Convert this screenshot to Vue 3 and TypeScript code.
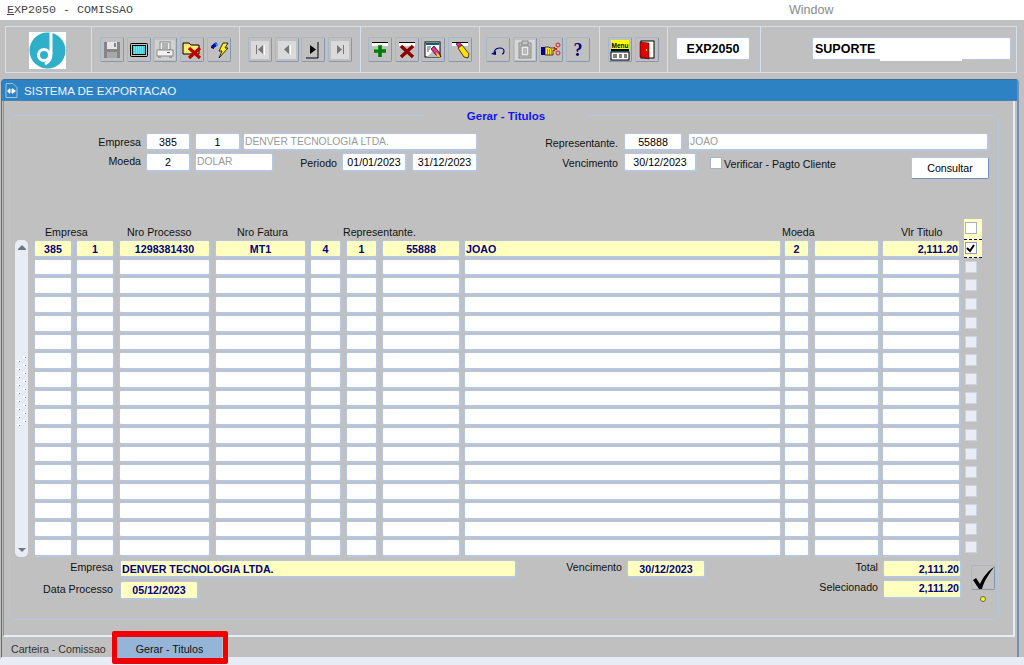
<script setup lang="ts">
// Oracle Forms style screen: EXP2050 - Gerar Titulos

type Tool = { icon: string; off?: boolean }
type Column = { width: number; gap: number; title: string; indent: number; value: string; align?: string }

const icons: Record<string, string> = {
  save: '<rect x="2" y="2" width="16" height="16" fill="#858585"/><rect x="5" y="2" width="10" height="7" fill="#e6e6e6"/><rect x="12" y="3" width="2" height="4" fill="#858585"/><rect x="5" y="12" width="10" height="6" fill="#a8a8a8"/>',
  screen: '<rect x="1" y="3" width="18" height="14" rx="2" fill="#000"/><rect x="2" y="4" width="16" height="12" fill="#c0c0c0"/><rect x="3" y="5" width="14" height="10" fill="#000"/><rect x="4" y="6" width="12" height="8" fill="#2fd6e8"/><path d="M5 7h10M5 9h10M5 11h10M5 13h10" stroke="#a8f0f8" stroke-dasharray="1 1"/>',
  print: '<rect x="0" y="0" width="20" height="20" fill="#d0d0d0"/><rect x="5" y="2" width="10" height="8" fill="#eee" stroke="#888"/><path d="M7 4h6M7 6h6M7 8h6" stroke="#777"/><rect x="2" y="10" width="16" height="6" fill="#f2f2f2" stroke="#888"/><rect x="12" y="12" width="3" height="1" fill="#555"/><rect x="3" y="16" width="3" height="2" fill="#999"/><rect x="14" y="16" width="3" height="2" fill="#999"/>',
  closeFile: '<path d="M1 3h6l2 2h8v9H1z" fill="#f5e56b" stroke="#000"/><path d="M3 7h12M3 9h12M3 11h12" stroke="#fff" stroke-dasharray="1 1"/><path d="M7 8l11 10M18 8L7 18" stroke="#c00000" stroke-width="3.200"/>',
  bolt: '<path d="M2 6l5-4 2 3-4 3z" fill="#0000c0"/><path d="M6 2l3 3-2 1z" fill="#20c0e0"/><path d="M2 6l3 2 0 1-3-1z" fill="#000"/><path d="M14 3l5 0-3 5 3 0-9 10 3-7-3 0z" fill="#ffee22" stroke="#000" stroke-width=".8"/>',
  first: '<rect x="1" y="1" width="18" height="18" fill="#dadada"/><rect x="6" y="5" width="1" height="9" fill="#777"/><path d="M13 5v9L8 9.500z" fill="#777"/><rect x="14" y="5" width="1" height="10" fill="#fff"/>',
  prev: '<rect x="1" y="1" width="18" height="18" fill="#dadada"/><path d="M12 5v9L7 9.500z" fill="#777"/><rect x="13" y="5" width="1" height="10" fill="#fff"/>',
  next: '<path d="M15 2v16H3" fill="none" stroke="#000"/><path d="M7 5v9l6-4.500z" fill="#000"/>',
  last: '<rect x="1" y="1" width="18" height="18" fill="#dadada"/><path d="M7 5v9l5-4.500z" fill="#777"/><rect x="13" y="5" width="1" height="9" fill="#777"/>',
  add: '<rect x="2" y="3" width="16" height="3" fill="#fff"/><rect x="2" y="2" width="16" height="1" fill="#000"/><path d="M10 5v12M4 11h12" stroke="#007a00" stroke-width="3.600"/><path d="M8.500 5.500h2M4.500 9.500h4" stroke="#20d020"/>',
  remove: '<rect x="2" y="3" width="16" height="3" fill="#fff"/><rect x="2" y="2" width="16" height="1" fill="#000"/><path d="M4 6l12 11M16 6L4 17" stroke="#8c0000" stroke-width="3.400"/>',
  editForm: '<rect x="2" y="2" width="15" height="15" fill="#fff" stroke="#000"/><rect x="3" y="3" width="13" height="2" fill="#00607a"/><path d="M4 7h4M4 9h3M4 11h2" stroke="#555"/><path d="M4 17l6-6 6 6z" fill="#bbb"/><path d="M8 9l3-3 5 6 2 5-5-2z" fill="#e83088" stroke="#000" stroke-width=".7"/><path d="M13 12l3 3 2 3-4-2z" fill="#ffe000"/>',
  erase: '<rect x="2" y="3" width="16" height="3" fill="#fff"/><rect x="2" y="2" width="16" height="1" fill="#000"/><path d="M6 4l3-2 3 3-3 3z" fill="#e83088" stroke="#000" stroke-width=".6"/><path d="M8 8l4-3 7 9-1 4-4-1z" fill="#ffe000" stroke="#000" stroke-width=".7"/>',
  undo: '<path d="M6 12c1-3 3-4 6-4 3 0 4 2 4 3 0 2-1 3-2 3" fill="none" stroke="#000080" stroke-width="1.100"/><path d="M3 14l5-3 0 4z" fill="#000080"/>',
  paste: '<rect x="0" y="0" width="20" height="20" fill="#d6d6d6"/><rect x="4" y="3" width="12" height="15" fill="#c4c4c4" stroke="#8a8a8a"/><rect x="7" y="1" width="6" height="4" fill="#c4c4c4" stroke="#8a8a8a"/><rect x="6" y="6" width="8" height="10" fill="#e8e8e8" stroke="#8a8a8a"/><path d="M8 9h4M8 11h4M8 13h4" stroke="#8a8a8a"/>',
  hand: '<rect x="0" y="7" width="4" height="8" fill="#0000a0"/><path d="M4 7h4l1 1h5v2h-2v5H4z" fill="#ffe040" stroke="#000" stroke-width=".7"/><path d="M6 10h5M6 12h5M6 14h5" stroke="#444" stroke-dasharray="1 1"/><circle cx="17" cy="5" r="2" fill="none" stroke="#d02020"/><circle cx="17" cy="13" r="2" fill="none" stroke="#d02020"/><path d="M13 7l3 3M13 11l3-3" stroke="#d02020"/>',
  help: '<text x="10" y="16" text-anchor="middle" font-family="Liberation Serif, serif" font-size="18" font-weight="700" fill="#000080">?</text>',
  menu: '<rect x="1" y="0" width="18" height="9" fill="#ffff00"/><text x="10" y="8" text-anchor="middle" font-family="Liberation Sans, sans-serif" font-size="7.500" font-weight="700" textLength="17" lengthAdjust="spacingAndGlyphs" fill="#000">Menu</text><rect x="1" y="9" width="18" height="2" fill="#000"/><rect x="1" y="11" width="18" height="1" fill="#00c0d0"/><rect x="1" y="12" width="18" height="8" fill="#fff" stroke="#000"/><path d="M3 15h4M9 15h3M14 15h3M3 17h4M9 17h3M14 17h3" stroke="#000"/>',
  exit: '<rect x="4" y="1" width="13" height="17" fill="#fff" stroke="#000"/><path d="M3 2l9 1v16l-9-2z" fill="#e00000" stroke="#000" stroke-width=".5"/><rect x="9" y="9" width="1" height="2" fill="#ffe000"/>'
}

const toolGroups: Tool[][] = [
  [{ icon: 'save', off: true }, { icon: 'screen' }, { icon: 'print', off: true }, { icon: 'closeFile' }, { icon: 'bolt' }],
  [{ icon: 'first', off: true }, { icon: 'prev', off: true }, { icon: 'next' }, { icon: 'last', off: true }],
  [{ icon: 'add' }, { icon: 'remove' }, { icon: 'editForm' }, { icon: 'erase' }],
  [{ icon: 'undo' }, { icon: 'paste', off: true }, { icon: 'hand' }, { icon: 'help' }],
  [{ icon: 'menu' }, { icon: 'exit' }]
]

const columns: Column[] = [
  { width: 38, gap: 4, title: 'Empresa', indent: 11, value: '385' },
  { width: 38, gap: 5, title: '', indent: 0, value: '1' },
  { width: 91, gap: 5, title: 'Nro Processo', indent: 8, value: '1298381430' },
  { width: 91, gap: 4, title: 'Nro Fatura', indent: 22, value: 'MT1' },
  { width: 31, gap: 5, title: '', indent: 0, value: '4' },
  { width: 31, gap: 5, title: 'Representante.', indent: -3, value: '1' },
  { width: 78, gap: 4, title: '', indent: 0, value: '55888' },
  { width: 317, gap: 3, title: '', indent: 0, value: 'JOAO', align: 'left' },
  { width: 25, gap: 5, title: 'Moeda', indent: -2, value: '2' },
  { width: 65, gap: 3, title: '', indent: 0, value: '' },
  { width: 78, gap: 4, title: 'Vlr Titulo', indent: 19, value: '2,111.20', align: 'right' }
]

const rowCount = 17
const gripDots = 9
</script>

<template>
  <div class="screen">
    <header class="menubar">
      <span class="form-name"><u>E</u>XP2050 - COMISSAO</span>
      <span class="menu-window">Window</span>
    </header>

    <div class="toolbar-wrap">
      <div class="toolbar">
        <div class="logo-cell">
          <svg class="logo" width="37" height="37" viewBox="0 0 37 37">
            <rect width="37" height="37" fill="#fff" />
            <circle cx="18.500" cy="18.500" r="18" fill="#2fb0c8" />
            <path d="M22 1v21c0 5-2 8-6 10" fill="none" stroke="#fff" stroke-width="3" />
            <circle cx="15" cy="23" r="5.500" fill="none" stroke="#fff" stroke-width="3" />
          </svg>
        </div>
        <div v-for="(group, g) in toolGroups" :key="g" class="tool-group" :class="'group-' + g">
          <button v-for="tool in group" :key="tool.icon" class="tool" type="button">
            <svg width="20" height="20" viewBox="0 0 20 20" v-html="icons[tool.icon]"></svg>
          </button>
        </div>
        <div class="tool-group group-code">
          <span class="code-box">EXP2050</span>
        </div>
        <div class="tool-group group-user">
          <span class="user-box">SUPORTE</span>
        </div>
      </div>
    </div>

    <section class="window">
      <div class="window-title">
        <svg class="title-icon" width="13" height="15" viewBox="0 0 13 15">
          <path d="M1 .5h7l4 4v10H1z" fill="#2d82c3" stroke="#9cc4e4" />
          <path d="M2 8l3-3v6zM11 8L7 5v6z" fill="#fff" />
          <rect x="5.500" y="6" width="1" height="4" fill="#fff" />
        </svg>
        <span>SISTEMA DE EXPORTACAO</span>
      </div>

      <div class="canvas">
        <div class="frame">
          <div class="frame-title">Gerar - Titulos</div>

          <div class="form-row">
            <label class="lbl lbl-left">Empresa</label>
            <span class="field w44 ml5">385</span>
            <span class="field w45 ml5">1</span>
            <span class="field w234 ml3 muted">DENVER TECNOLOGIA LTDA.</span>
            <label class="lbl lbl-right">Representante.</label>
            <span class="field w58 ml6">55888</span>
            <span class="field w300 ml6 muted">JOAO</span>
          </div>
          <div class="form-row form-row-second">
            <label class="lbl lbl-left">Moeda</label>
            <span class="field w44 ml5">2</span>
            <span class="field w78 ml5 muted">DOLAR</span>
            <label class="lbl lbl-period">Periodo</label>
            <span class="field w64 ml5">01/01/2023</span>
            <span class="field w65 ml6">31/12/2023</span>
            <label class="lbl lbl-right">Vencimento</label>
            <span class="field w72 ml6">30/12/2023</span>
            <span class="check check-form"></span>
            <label class="lbl lbl-check">Verificar - Pagto Cliente</label>
            <button class="query-btn" type="button">Consultar</button>
          </div>

          <div class="grid-head">
            <span
              v-for="(col, c) in columns"
              :key="c"
              class="head-cell"
              :style="{ width: col.width + 'px', marginRight: col.gap + 'px', textIndent: col.indent + 'px' }"
            >
              {{ col.title }}
            </span>
            <span class="head-check"><i class="check"></i></span>
          </div>

          <div class="grid-body">
            <div class="scrollbar">
              <span class="arrow arrow-up"></span>
              <div class="grip">
                <i v-for="n in gripDots" :key="n" class="dot-pair"></i>
              </div>
              <span class="arrow arrow-down"></span>
            </div>
            <div class="rows">
              <div v-for="r in rowCount" :key="r" class="row" :class="{ current: r === 1 }">
                <span
                  v-for="(col, c) in columns"
                  :key="c"
                  class="field cell"
                  :class="col.align"
                  :style="{ width: col.width + 'px', marginRight: col.gap + 'px' }"
                >
                  {{ r === 1 ? col.value : '' }}
                </span>
                <span class="row-check">
                  <i class="check" :class="r === 1 ? 'checked' : 'off'">
                    <svg v-if="r === 1" width="11" height="11" viewBox="0 0 11 11">
                      <path d="M2 5l3 3 4-6" fill="none" stroke="#000" stroke-width="2" />
                    </svg>
                  </i>
                </span>
              </div>
            </div>
          </div>

          <div class="summary">
            <div class="summary-fields">
              <div class="summary-row">
                <label class="lbl lbl-sum">Empresa</label>
                <span class="field data left w396 ml7">DENVER TECNOLOGIA LTDA.</span>
                <label class="lbl lbl-sum-due">Vencimento</label>
                <span class="field data w78 ml5">30/12/2023</span>
                <label class="lbl lbl-sum-total">Total</label>
                <span class="field data right w78 ml5">2,111.20</span>
              </div>
              <div class="summary-row summary-row-second">
                <label class="lbl lbl-sum lbl-down">Data Processo</label>
                <span class="field data w78 ml7">05/12/2023</span>
                <label class="lbl lbl-sum-sel">Selecionado</label>
                <span class="field data right w78 ml5">2,111.20</span>
              </div>
            </div>
            <div class="confirm">
              <button class="tool confirm-btn" type="button">
                <svg width="23" height="24" viewBox="0 0 23 24">
                  <path d="M1 14l3-2 4 6C11 11 16 5 22 1 17 8 12 15 10 23H7z" fill="#000" />
                </svg>
              </button>
              <i class="confirm-dot"></i>
            </div>
          </div>
        </div>
      </div>

      <nav class="tabs">
        <span class="tab">Carteira - Comissao</span>
        <span class="tab tab-active">Gerar - Titulos</span>
      </nav>
    </section>

    <div class="statusbar"></div>
    <div class="tab-highlight"></div>
  </div>
</template>

<style scoped>
.screen {
  position: relative;
  width: 1024px;
  height: 665px;
  overflow: hidden;
  background: #c0c0c0;
  font-family: "Liberation Sans", Arial, sans-serif;
  font-size: 10.67px;
  color: #111;
}

.menubar {
  display: flex;
  height: 20px;
  align-items: center;
  background: #fff;
  padding-left: 7px;
}
.form-name {
  width: 782px;
  font-family: "Liberation Mono", monospace;
  font-size: 11.67px;
  color: #444;
}
.menu-window {
  font-size: 12.5px;
  color: #8a8a8a;
}

.toolbar-wrap {
  height: 59px;
  box-sizing: border-box;
  padding: 6px 0 0 5px;
}
.toolbar {
  display: flex;
  width: 1012px;
  height: 47px;
  box-sizing: border-box;
  border: 1px solid #d4e0f0;
}
.logo-cell {
  display: flex;
  width: 86px;
  flex: none;
  padding: 5px 0 0 23px;
  box-sizing: border-box;
  border-right: 1px solid #d4e0f0;
}
.logo {
  display: block;
}
.tool-group {
  display: flex;
  flex: none;
  height: 100%;
  box-sizing: border-box;
  padding: 10px 0 0 8px;
  gap: 2.67px;
  border-right: 1px solid #d4e0f0;
}
.group-0 { width: 148px; }
.group-1 { width: 121px; }
.group-2 { width: 119px; padding-left: 7px; }
.group-3 { width: 120px; padding-left: 6px; }
.group-4 { width: 68px; }
.group-code { width: 93px; }
.group-user { flex: 1; padding-left: 51px; border-right: 0; }

.tool {
  display: flex;
  flex: none;
  align-items: center;
  justify-content: center;
  width: 24px;
  height: 25px;
  padding: 0;
  box-sizing: border-box;
  border: 1px solid #a9b6c8;
  border-right-color: #8496b0;
  border-bottom-color: #8496b0;
  border-radius: 2px;
  background: #c0c0c0;
}
.tool svg {
  overflow: visible;
}

.code-box,
.user-box {
  position: relative;
  display: block;
  box-sizing: border-box;
  height: 23px;
  background: #fff;
  border: 1px solid #b5c6de;
  border-radius: 2px;
  font-size: 12.5px;
  font-weight: 700;
  color: #000;
  line-height: 23px;
}
.code-box {
  width: 74px;
  text-align: center;
}
.user-box {
  width: 199px;
  padding-left: 2px;
}
/* reference has this part of the field's lower edge blanked out */
.user-box::after {
  content: '';
  position: absolute;
  left: 67px;
  bottom: -2px;
  width: 82px;
  height: 3px;
  background: #fff;
}

.window {
  display: flex;
  flex-direction: column;
  width: 1018px;
  height: 578px;
  box-sizing: border-box;
  margin-left: 1px;
  border-top: 1px solid #3c6b9c;
  border-left: 1px solid #4a6fa0;
  border-right: 2px solid #6f8fb8;
  border-radius: 4px 4px 0 0;
}
.window-title {
  display: flex;
  flex: none;
  height: 21px;
  align-items: center;
  gap: 6px;
  padding: 1px 0 0 3px;
  background: #2d82c3;
  color: #eef4fa;
  font-size: 11.6px;
  border-bottom: 1px solid #4a7fb0;
  box-sizing: border-box;
}
.title-icon {
  display: block;
}

.canvas {
  flex: none;
  height: 536px;
  box-sizing: border-box;
  margin: 0 2px 0 1px;
  padding: 14px 0 0 5px;
  border-left: 1px solid #7f93ad;
  border-right: 2px solid #e8edf5;
  border-bottom: 2px solid #e8edf5;
}
.frame {
  position: relative;
  width: 990px;
  height: 505px;
  box-sizing: border-box;
  border: 1px solid #b5c6de;
  border-radius: 5px;
  padding-top: 17px;
}
.frame-title {
  position: absolute;
  top: -8px;
  left: 415px;
  width: 162px;
  height: 16px;
  background: #c0c0c0;
  color: #1414f0;
  font-size: 11.5px;
  font-weight: 700;
  line-height: 16px;
  text-align: center;
}

.form-row {
  display: flex;
  height: 17px;
  align-items: center;
}
.form-row-second {
  height: 18px;
  margin-top: 3px;
  align-items: flex-start;
}
.lbl {
  display: block;
  flex: none;
  line-height: 15px;
  text-align: right;
  white-space: nowrap;
}
.lbl-left { width: 131px; padding-top: 1px; }
.lbl-right { width: 141px; padding-top: 3px; }
.lbl-period { width: 64px; padding-top: 3px; }
.lbl-check { margin-left: 2px; padding-top: 4px; text-align: left; }
.form-row-second .lbl-left { padding-top: 1px; }

.field {
  display: block;
  flex: none;
  height: 100%;
  box-sizing: border-box;
  padding-top: 1px;
  background: #fff;
  border: 1px solid #b5c6de;
  border-radius: 2px;
  box-shadow: 1px 1px 0 #b5c6de;
  color: #000;
  line-height: 14px;
  text-align: center;
  overflow: hidden;
  white-space: nowrap;
}
.muted {
  color: #9a9a9a;
  font-size: 10.3px;
  text-align: left;
  padding-left: 1px;
}
.data {
  background: #ffffc0;
  color: #000080;
  font-weight: 700;
}
.left { text-align: left; padding-left: 1px; }
.right { text-align: right; padding-right: 1px; }

.w44 { width: 44px; }
.w45 { width: 45px; }
.w58 { width: 58px; }
.w64 { width: 64px; }
.w65 { width: 65px; }
.w72 { width: 72px; }
.w78 { width: 78px; }
.w234 { width: 234px; }
.w300 { width: 300px; }
.w396 { width: 396px; }
.ml3 { margin-left: 3px; }
.ml5 { margin-left: 5px; }
.ml6 { margin-left: 6px; }
.ml7 { margin-left: 7px; }

.check {
  display: block;
  flex: none;
  width: 12px;
  height: 12px;
  box-sizing: border-box;
  background: #fff;
  border: 1px solid #a4b4c8;
}
.check-form {
  margin: 4px 0 0 14px;
}
.check.off {
  background: #e8edf5;
  border-color: #ccd4e0;
}
.check.checked {
  border-color: #8d9db4;
}
.check svg {
  display: block;
  margin: 0 0 0 -1px;
}

.query-btn {
  flex: none;
  width: 78px;
  height: 22px;
  margin: 4px 9px 0 auto;
  padding: 0;
  background: #fff;
  border: 1px solid #b5c6de;
  border-right-color: #6f8fb8;
  border-bottom-color: #6f8fb8;
  border-radius: 2px;
  font: inherit;
  color: #000;
}

.grid-head {
  display: flex;
  height: 14px;
  margin-top: 54px;
  padding-left: 24px;
}
.head-cell {
  display: block;
  flex: none;
  line-height: 14px;
  white-space: nowrap;
}
.head-check {
  display: block;
  flex: none;
  width: 18px;
  height: 20px;
  margin: -6px 0 0 0;
  padding: 3px 0 0 1px;
  box-sizing: border-box;
  background: #ffffc0;
}

.grid-body {
  display: flex;
  height: 317px;
  margin-top: 1px;
  padding-left: 5px;
}
.scrollbar {
  display: flex;
  flex: none;
  flex-direction: column;
  align-items: center;
  width: 13px;
  margin-right: 6px;
  background: #e8edf5;
  border-radius: 5px;
}
.arrow {
  display: block;
  flex: none;
  width: 0;
  height: 0;
  border-left: 4px solid transparent;
  border-right: 4px solid transparent;
}
.arrow-up {
  margin-top: 5px;
  border-bottom: 4px solid #6d7686;
  box-shadow: 0 1px 0 #6d7686;
}
.arrow-down {
  margin-bottom: 5px;
  border-top: 4px solid #6d7686;
}
.grip {
  display: flex;
  flex: 1;
  flex-direction: column;
  justify-content: center;
  padding-bottom: 14px;
}
.dot-pair {
  display: block;
  flex: none;
  width: 9px;
  height: 8px;
  background:
    linear-gradient(#7f93ad, #7f93ad) 8px 1px / 1px 1px no-repeat,
    linear-gradient(#fff, #fff) 6px 0 / 2px 2px no-repeat,
    linear-gradient(#7f93ad, #7f93ad) 2px 5px / 1px 1px no-repeat,
    linear-gradient(#fff, #fff) 0 4px / 2px 2px no-repeat;
}
.rows {
  display: grid;
  flex: none;
  grid-template-rows: repeat(17, 1fr);
  row-gap: 2px;
  height: 316px;
}
.row {
  display: flex;
  min-height: 0;
}
.row.current .cell {
  background: #ffffc0;
  color: #000080;
  font-weight: 700;
}
.row-check {
  display: block;
  flex: none;
  width: 18px;
  padding: 2px 0 0 1px;
  box-sizing: border-box;
}
.row.current .row-check {
  margin-top: -1px;
  margin-bottom: -1px;
  background: #ffffc0;
  border-top: 1px dashed #000080;
  border-bottom: 1px dashed #000080;
}

.summary {
  display: flex;
  margin-top: 3px;
}
.summary-fields {
  display: flex;
  flex: none;
  flex-direction: column;
  width: 951px;
}
.summary-row {
  display: flex;
  height: 17px;
}
.summary-row-second {
  height: 18px;
  margin-top: 4px;
}
.lbl-sum { width: 103px; }
.lbl-down { padding-top: 1px; }
.lbl-sum-due { width: 106px; }
.lbl-sum-total { width: 173px; }
.lbl-sum-sel { margin-left: auto; margin-top: -1px; }
.summary-row-second .right { margin-top: -1px; padding-top: 0; }
.confirm {
  display: flex;
  flex: none;
  flex-direction: column;
  align-items: center;
  width: 24px;
  margin: 5px 0 0 10px;
}
.confirm-btn svg {
  display: block;
}
.confirm-dot {
  display: block;
  width: 6px;
  height: 6px;
  margin-top: 6px;
  background: #ffff00;
  border: 1px solid #666;
  border-radius: 50%;
  box-sizing: border-box;
}

.tabs {
  display: flex;
  flex: 1;
  margin-left: 2px;
}
.tab {
  display: block;
  line-height: 24px;
  padding-left: 7px;
  width: 107px;
  color: #333;
  box-sizing: border-box;
}
.tab-active {
  width: 106px;
  margin-left: 5px;
  padding-left: 1px;
  text-align: center;
  background: #94b5d8;
  color: #111;
}

.statusbar {
  height: 8px;
  background: #e8edf5;
  border-radius: 4px 0 0 0;
}
.tab-highlight {
  position: absolute;
  left: 112px;
  top: 631px;
  width: 116px;
  height: 33px;
  box-sizing: border-box;
  border: 5px solid #f00000;
  border-bottom-width: 6px;
  border-top-width: 6px;
  border-radius: 2px;
}
</style>

<style>
html,
body {
  margin: 0;
  background: #c0c0c0;
  overflow: hidden;
}
</style>
